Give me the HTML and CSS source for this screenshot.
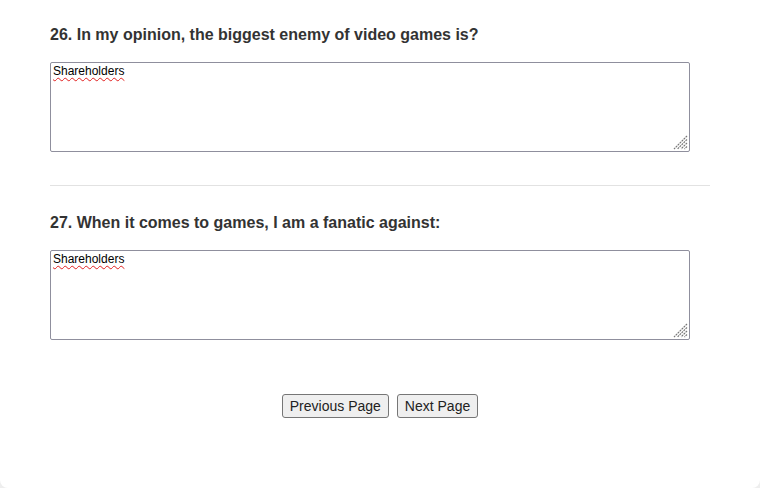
FILE: index.html
```html
<!DOCTYPE html>
<html>
<head>
<meta charset="utf-8">
<link rel="stylesheet" href="styles.css">
</head>
<body>
<div class="card">
  <div class="question">
    <h2 class="q-title">26. In my opinion, the biggest enemy of video games is?</h2>
    <div class="field">
      <textarea class="answer">Shareholders</textarea>
      <svg class="grip" width="15" height="15" viewBox="0 0 15 15"><path d="M14 1 L1 14 M14 4.5 L4.5 14 M14 8 L8 14 M14 11.5 L11.5 14" stroke="#777777" stroke-width="1.2" stroke-dasharray="2 0.8" fill="none"/></svg>
    </div>
  </div>
  <hr class="divider">
  <div class="question">
    <h2 class="q-title">27. When it comes to games, I am a fanatic against:</h2>
    <div class="field">
      <textarea class="answer">Shareholders</textarea>
      <svg class="grip" width="15" height="15" viewBox="0 0 15 15"><path d="M14 1 L1 14 M14 4.5 L4.5 14 M14 8 L8 14 M14 11.5 L11.5 14" stroke="#777777" stroke-width="1.2" stroke-dasharray="2 0.8" fill="none"/></svg>
    </div>
  </div>
  <div class="nav">
    <button class="nav-btn">Previous Page</button>
    <button class="nav-btn">Next Page</button>
  </div>
</div>
</body>
</html>
```
FILE: styles.css
```css
html, body {
  margin: 0;
  padding: 0;
  background: #eeeeee;
  height: 488px;
  overflow: hidden;
}
.card {
  background: #ffffff;
  height: 488px;
  border-radius: 0 0 8px 8px;
  padding: 0 50px;
  box-sizing: border-box;
  font-family: "Liberation Sans", Arial, sans-serif;
  color: #333333;
  display: flex;
  flex-direction: column;
}
.question {
  display: flex;
  flex-direction: column;
}
.q-title {
  font-size: 16px;
  font-weight: bold;
  margin: 25px 0 0 0;
  line-height: 20px;
  color: #333333;
}
.field {
  position: relative;
  margin-top: 17px;
  width: 640px;
  height: 90px;
}
.answer {
  display: block;
  width: 640px;
  height: 90px;
  margin: 0;
  box-sizing: border-box;
  border: 1px solid #8f8f9d;
  border-radius: 2px;
  padding: 1px 2px;
  font-family: "Liberation Sans", Arial, sans-serif;
  font-size: 12px;
  color: #000;
  text-decoration: underline wavy #e02020;
  text-decoration-thickness: 1px;
  text-underline-offset: 2px;
  resize: none;
}
.grip {
  position: absolute;
  right: 2px;
  bottom: 2px;
}
.divider {
  border: 0;
  border-top: 1px solid #e2e2e2;
  margin: 33px 0 2px 0;
  width: 660px;
}
.nav {
  margin-top: 54px;
  display: flex;
  justify-content: center;
  gap: 8px;
}
.nav-btn {
  font-family: "Liberation Sans", Arial, sans-serif;
  font-size: 14px;
  color: #222;
  background: #efefef;
  border: 1px solid #767676;
  border-radius: 3px;
  height: 24px;
  padding: 0 7px;
}
```
